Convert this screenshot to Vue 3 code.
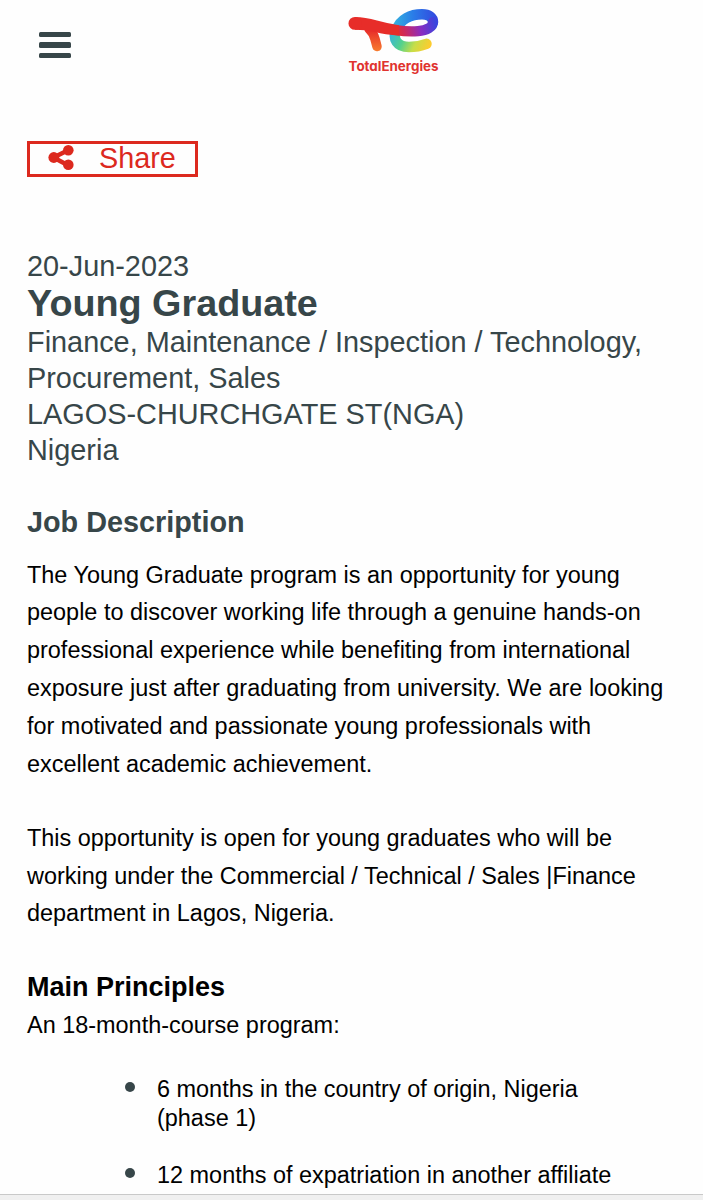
<template>
  <div class="page">
    <header class="topbar">
      <button class="menu" aria-label="Menu">
        <span v-for="n in 3" :key="n" class="bar"></span>
      </button>
      <svg class="logo" width="98" height="72" viewBox="0 0 98 72">
        <defs>
          <linearGradient id="top" gradientUnits="userSpaceOnUse" x1="48" y1="0" x2="92" y2="0">
            <stop offset="0" stop-color="#35b4de" />
            <stop offset="0.45" stop-color="#2a7de8" />
            <stop offset="1" stop-color="#3347df" />
          </linearGradient>
          <linearGradient id="low" gradientUnits="userSpaceOnUse" x1="47" y1="24" x2="85" y2="42">
            <stop offset="0" stop-color="#37b4dc" />
            <stop offset="0.35" stop-color="#53d18d" />
            <stop offset="0.65" stop-color="#c7de48" />
            <stop offset="1" stop-color="#ffcb2d" />
          </linearGradient>
          <linearGradient id="arm" gradientUnits="userSpaceOnUse" x1="50" y1="25" x2="90" y2="15">
            <stop offset="0" stop-color="#e72b2d" />
            <stop offset="0.25" stop-color="#c92962" />
            <stop offset="0.6" stop-color="#8b2cc0" />
            <stop offset="1" stop-color="#3a45de" />
          </linearGradient>
          <linearGradient id="leg" gradientUnits="userSpaceOnUse" x1="0" y1="26" x2="0" y2="46">
            <stop offset="0" stop-color="#e8302a" />
            <stop offset="1" stop-color="#f77b2d" />
          </linearGradient>
        </defs>
        <g fill="none" stroke-linecap="round" stroke-linejoin="round">
          <path d="M51.5 24C47 34 52 42 64 42C72 42 77 40.5 81.5 38.8" stroke="url(#low)" stroke-width="10.5" />
          <path d="M51.5 25C55 14 66 9.2 77 9.2C84 9.2 88 12.5 88 17" stroke="url(#top)" stroke-width="10.5" />
          <path d="M50 25C58 26.3 66 26.8 73 26.2C82 25.5 88 22 88 17" stroke="url(#arm)" stroke-width="10.2" />
          <path d="M24 24Q28.5 28 30 34L32 41.5" stroke="url(#leg)" stroke-width="9.5" />
          <path d="M10 12Q20 12.3 32 15.5Q42 18.3 54 20.3V30.6Q40 29.5 30 27Q20 24.8 10 24.8Z" fill="#e72d29" />
          <path d="M9.9 18.4H10.2" stroke="#e72d29" stroke-width="12.8" />
        </g>
        <text x="3.5" y="66" textLength="90" lengthAdjust="spacingAndGlyphs">TotalEnergies</text>
      </svg>
    </header>

    <button class="share">
      <svg width="26" height="26" viewBox="0 0 26 26">
        <path d="M20.5 5L5.5 12.5L20.5 20.5" fill="none" stroke="currentColor" stroke-width="4.5" />
        <circle cx="20.3" cy="5.3" r="5.3" fill="currentColor" />
        <circle cx="5.8" cy="12.5" r="5.4" fill="currentColor" />
        <circle cx="20.3" cy="19.8" r="5.3" fill="currentColor" />
      </svg>
      <span>Share</span>
    </button>

    <section class="summary">
      <div>{{ job.date }}</div>
      <h1>{{ job.title }}</h1>
      <div>{{ job.fields }}</div>
      <div>{{ job.site }}</div>
      <div>{{ job.country }}</div>
    </section>

    <section class="description">
      <h2>Job Description</h2>
      <p v-for="text in paragraphs" :key="text">{{ text }}</p>
      <h3>Main Principles</h3>
      <div class="intro">An 18-month-course program:</div>
      <ul>
        <li v-for="phase in phases" :key="phase">{{ phase }}</li>
      </ul>
    </section>

    <div class="bottom-edge"></div>
  </div>
</template>

<script setup>
const job = {
  date: '20-Jun-2023',
  title: 'Young Graduate',
  fields: 'Finance, Maintenance / Inspection / Technology, Procurement, Sales',
  site: 'LAGOS-CHURCHGATE ST(NGA)',
  country: 'Nigeria'
}

const paragraphs = [
  'The Young Graduate program is an opportunity for young people to discover working life through a genuine hands-on professional experience while benefiting from international exposure just after graduating from university. We are looking for motivated and passionate young professionals with excellent academic achievement.',
  'This opportunity is open for young graduates who will be working under the Commercial / Technical / Sales |Finance department in Lagos, Nigeria.'
]

const phases = [
  '6 months in the country of origin, Nigeria (phase 1)',
  '12 months of expatriation in another affiliate'
]
</script>

<style>
body {
  margin: 0;
  background: #fefefe;
}
</style>

<style scoped>
.page {
  position: relative;
  box-sizing: border-box;
  height: 1200px;
  padding: 0 27px;
  overflow: hidden;
  font-family: "Liberation Sans", Arial, sans-serif;
  color: #374649;
}

.topbar {
  display: flex;
  align-items: flex-start;
  height: 141px;
}

.menu {
  display: flex;
  flex-direction: column;
  gap: 5px;
  margin: 32px 0 0 12px;
  padding: 0;
  border: 0;
  background: none;
}

.bar {
  width: 32px;
  height: 5.3px;
  border-radius: 1.5px;
  background: #374649;
}

.logo {
  margin: 5px 0 0 274px;
}

.logo text {
  font-family: Inter, sans-serif;
  font-size: 13px;
  font-weight: 700;
  font-feature-settings: "cv11";
  fill: #e0332f;
}

.share {
  display: flex;
  align-items: center;
  box-sizing: border-box;
  width: 171px;
  height: 36px;
  padding: 0 0 2px 18px;
  border: 3px solid #dc291e;
  background: none;
  color: #dc291e;
  font: 28.8px/30px "Liberation Sans", Arial, sans-serif;
}

.share span {
  margin-left: 25px;
}

.summary {
  margin-top: 71px;
  font-size: 28.86px;
  line-height: 36px;
}

h1 {
  margin: -1px 0 1px;
  font-size: 37.75px;
  line-height: 40px;
}

h2 {
  margin: 36px 0 16.6px;
  font-size: 28.8px;
  line-height: 36px;
}

p {
  margin: 0 0 36px;
  font-size: 23.44px;
  line-height: 37.85px;
  color: #000;
}

h3 {
  margin: 0;
  font-size: 27px;
  line-height: 36px;
  color: #000;
}

.intro {
  font-size: 23.44px;
  line-height: 40px;
  color: #000;
}

ul {
  margin: 29.5px 46px 0 98px;
  padding: 0;
  list-style: none;
}

li {
  display: flex;
  margin-bottom: 28.5px;
  font-size: 23.44px;
  line-height: 29px;
  color: #000;
}

li::before {
  content: "";
  flex: none;
  width: 10px;
  height: 10px;
  margin: 7px 22px 0 0;
  border-radius: 50%;
  background: #374649;
}

/* browser chrome showing under the page */
.bottom-edge {
  position: absolute;
  left: 0;
  right: 0;
  bottom: 0;
  height: 5px;
  border-top: 1px solid #c9c9c9;
  background: #f0f0f0;
}
</style>
